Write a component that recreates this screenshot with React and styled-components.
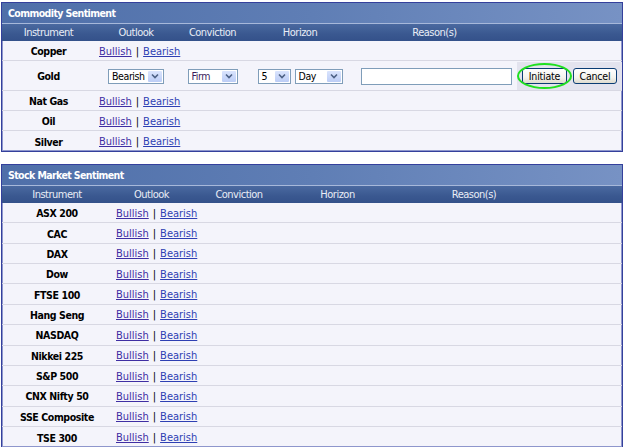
import React from "react";
import styled, { createGlobalStyle } from "styled-components";

const Global = createGlobalStyle`
  html, body { margin: 0; padding: 0; background: #ffffff; }
  body { font-family: "DejaVu Sans Condensed", "DejaVu Sans", Tahoma, sans-serif; font-size: 11px; color: #000; }
`;

const Page = styled.div`
  display: flex;
  flex-direction: column;
  gap: 12px;
  padding: 2px 0 0 1px;
  width: 622px;
`;

const Panel = styled.section`
  border: 1px solid #34409c;
  box-shadow: inset 0 0 0 1px #8e96cc;
  background: #f4f4fb;
  overflow: hidden;
`;

const TitleBar = styled.div`
  height: 20px;
  display: flex;
  align-items: center;
  padding-left: 6px;
  font-weight: bold;
  font-size: 10.5px;
  letter-spacing: -0.6px;
  color: #ffffff;
  background: linear-gradient(90deg, #4f6fa9 0%, #5f7eb5 50%, #7792c4 100%);
  border-bottom: 1px solid #a7b8da;
`;

const Grid = styled.div`
  display: grid;
  grid-template-columns: ${(p) => p.$cols};
`;

const HeaderRow = styled(Grid)`
  height: 17px;
  background: linear-gradient(180deg, #4a69a0 0%, #3a5890 60%, #34518a 100%);
  color: #e9edf6;
  align-items: center;
`;

const HeadCell = styled.div`
  text-align: center;
  white-space: nowrap;
  letter-spacing: -0.5px;
`;

const Row = styled(Grid)`
  height: ${(p) => p.$h}px;
  box-sizing: border-box;
  padding-top: 1px;
  border-bottom: 1px solid #d8d8e3;
  align-items: stretch;
  &:last-child { border-bottom: none; }
`;

const Cell = styled.div`
  display: flex;
  align-items: center;
  justify-content: ${(p) => p.$justify || "flex-start"};
  padding-left: ${(p) => p.$pad || 0}px;
  gap: ${(p) => p.$gap || 0}px;
  background: ${(p) => p.$bg || "transparent"};
  white-space: nowrap;
`;

const Name = styled(Cell)`
  justify-content: center;
  font-weight: bold;
  font-size: 10.5px;
  letter-spacing: -0.4px;
`;

const Link = styled.a`
  color: ${(p) => p.$c};
  text-decoration: underline;
  cursor: pointer;
`;

const Pipe = styled.span`
  margin: 0 4px;
  color: #000;
`;

const SelectBox = styled.div`
  display: flex;
  align-items: stretch;
  width: ${(p) => p.$w}px;
  height: 15px;
  box-sizing: border-box;
  border: 1px solid #7f9db9;
  background: #fff;
  color: ${(p) => p.$color || "#000"};
`;

const SelectText = styled.span`
  flex: 1;
  display: flex;
  align-items: center;
  padding-left: 3px;
  font-size: 10.5px;
  letter-spacing: -0.4px;
`;

const DropBtn = styled.span`
  width: 14px;
  margin: 1px;
  display: flex;
  align-items: center;
  justify-content: center;
  background: linear-gradient(180deg, #dae4fd, #bccdf6);
  border-radius: 1px;
`;

const TextBox = styled.div`
  width: 151px;
  height: 17px;
  box-sizing: border-box;
  border: 1px solid #7f9db9;
  background: #fff;
  margin-left: 4px;
`;

const Button = styled.button`
  height: 16px;
  width: ${(p) => p.$w}px;
  padding: 0;
  box-sizing: border-box;
  border: 1px solid #0a3c74;
  border-radius: 3px;
  background: linear-gradient(180deg, #ffffff 0%, #f4f3ee 60%, #dedbcf 100%);
  font-family: inherit;
  font-size: 10.5px;
  letter-spacing: -0.2px;
  color: #000;
  line-height: 13px;
`;

const Highlight = styled.span`
  position: relative;
  display: inline-flex;
  &::after {
    content: "";
    position: absolute;
    left: -5px;
    top: -5px;
    width: 51px;
    height: 22px;
    border: 2px solid #1fe01f;
    border-radius: 50%;
  }
`;

const Chevron = () => (
  <svg width="8" height="6" viewBox="0 0 8 6">
    <path d="M1 1.5 L4 4.5 L7 1.5" fill="none" stroke="#4d6185" strokeWidth="1.6" />
  </svg>
);

const Select = ({ w, value, color }) => (
  <SelectBox $w={w} $color={color}>
    <SelectText>{value}</SelectText>
    <DropBtn>
      <Chevron />
    </DropBtn>
  </SelectBox>
);

const Outlook = ({ pad }) => (
  <Cell $pad={pad}>
    <Link $c="#3f2ea3">Bullish</Link>
    <Pipe>|</Pipe>
    <Link $c="#2e3fb3">Bearish</Link>
  </Cell>
);

const HEADS = ["Instrument", "Outlook", "Conviction", "Horizon", "Reason(s)", ""];

const Table = ({ cols, children }) => (
  <>
    <HeaderRow $cols={cols}>
      {HEADS.map((h, i) => (
        <HeadCell key={i}>{h}</HeadCell>
      ))}
    </HeaderRow>
    {children}
  </>
);

const COMMODITY_COLS = "93px 82px 71px 104px 165px 1fr";
const STOCK_COLS = "110px 79px 96px 101px 172px 1fr";

const stocks = [
  "ASX 200",
  "CAC",
  "DAX",
  "Dow",
  "FTSE 100",
  "Hang Seng",
  "NASDAQ",
  "Nikkei 225",
  "S&P 500",
  "CNX Nifty 50",
  "SSE Composite",
  "TSE 300",
];

const SimpleRow = ({ cols, name, h }) => (
  <Row $cols={cols} $h={h}>
    <Name>{name}</Name>
    <Outlook pad={4} />
    <Cell />
    <Cell />
    <Cell />
    <Cell />
  </Row>
);

export default function App() {
  return (
    <>
      <Global />
      <Page>
        <Panel>
          <TitleBar>Commodity Sentiment</TitleBar>
          <Table cols={COMMODITY_COLS}>
            <SimpleRow cols={COMMODITY_COLS} name="Copper" h={20} />
            <Row $cols={COMMODITY_COLS} $h={30}>
              <Name>Gold</Name>
              <Cell $justify="center">
                <Select w={56} value="Bearish" />
              </Cell>
              <Cell $justify="center">
                <Select w={50} value="Firm" color="#3a1c5c" />
              </Cell>
              <Cell $justify="center" $gap={4}>
                <Select w={33} value="5" />
                <Select w={48} value="Day" />
              </Cell>
              <Cell $justify="center">
                <TextBox />
              </Cell>
              <Cell $bg="#e3e3ee" $pad={5} $gap={6}>
                <Highlight>
                  <Button $w={45}>Initiate</Button>
                </Highlight>
                <Button $w={44}>Cancel</Button>
              </Cell>
            </Row>
            <SimpleRow cols={COMMODITY_COLS} name="Nat Gas" h={20} />
            <SimpleRow cols={COMMODITY_COLS} name="Oil" h={20} />
            <SimpleRow cols={COMMODITY_COLS} name="Silver" h={20} />
          </Table>
        </Panel>
        <Panel>
          <TitleBar>Stock Market Sentiment</TitleBar>
          <Table cols={STOCK_COLS}>
            {stocks.map((s) => (
              <SimpleRow key={s} cols={STOCK_COLS} name={s} h={20.36} />
            ))}
          </Table>
        </Panel>
      </Page>
    </>
  );
}
